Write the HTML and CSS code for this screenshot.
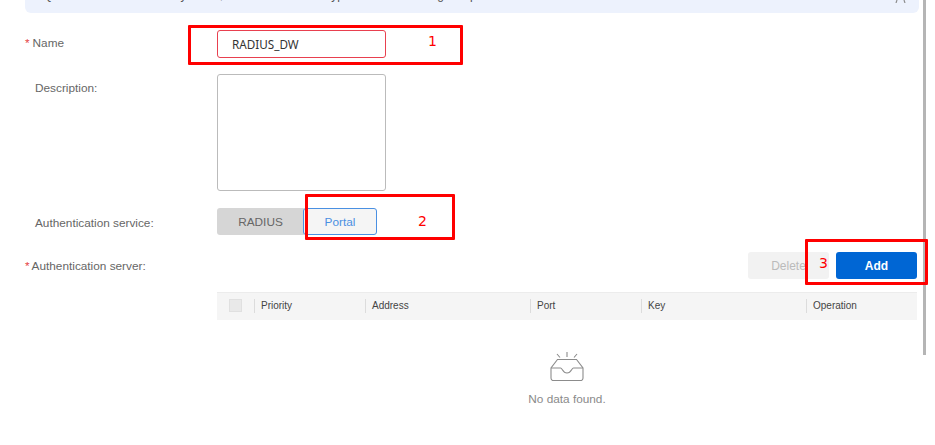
FILE: index.html
```html
<!DOCTYPE html>
<html lang="en">
<head>
<meta charset="utf-8">
<title>Authentication server template</title>
<link rel="stylesheet" href="styles.css">
</head>
<body>
<div class="page">
  <div class="scrollbar"></div>
  <div class="banner">
    <p class="banner-text">Q: Set radius and local key mode, and select a mode type for the server log into port</p>
    <svg class="banner-close" width="12" height="3" viewBox="0 0 12 3" fill="none" stroke="#8c8c8c" stroke-width="1.2">
      <path d="M2 0l-1 3M9 0l1 3"/>
    </svg>
  </div>
  <form class="form">
    <div class="row row-name">
      <label class="label label-name"><span class="req">*</span>Name</label>
      <input class="input" type="text" value="RADIUS_DW">
    </div>
    <div class="row row-desc">
      <label class="label label-plain">Description:</label>
      <textarea class="textarea"></textarea>
    </div>
    <div class="row row-service">
      <label class="label label-plain label-service">Authentication service:</label>
      <div class="toggle">
        <span class="toggle-off">RADIUS</span>
        <span class="toggle-on">Portal</span>
      </div>
    </div>
    <div class="row row-server">
      <label class="label label-server"><span class="req">*</span>Authentication server:</label>
      <div class="actions">
        <button type="button" class="btn btn-disabled">Delete</button>
        <button type="button" class="btn btn-primary">Add</button>
      </div>
    </div>
    <div class="table-wrap">
      <div class="thead">
        <div class="th th-check"><span class="checkbox"></span></div>
        <div class="th th-priority">Priority</div>
        <div class="th th-address">Address</div>
        <div class="th th-port">Port</div>
        <div class="th th-key">Key</div>
        <div class="th th-op">Operation</div>
      </div>
      <div class="empty">
        <svg class="empty-icon" width="34" height="30" viewBox="0 0 34 30" fill="none" stroke="#8c8c8c" stroke-width="1.1">
          <path d="M17 0v5M7 2l3 3.500M27 2l-3 3.500"/>
          <path d="M7.500 7.500h19l6.500 8.500v10a2.500 2.500 0 0 1-2.500 2.500h-27a2.500 2.500 0 0 1-2.500-2.500v-10z"/>
          <path d="M1 16h9.500c2 0 2 5 6.500 5s4.500-5 6.500-5h9.500"/>
        </svg>
        <p class="empty-text">No data found.</p>
      </div>
    </div>
  </form>
  <div class="mark mark-1"></div>
  <div class="mark mark-2"></div>
  <div class="mark mark-3"></div>
  <span class="num num-1">1</span>
  <span class="num num-2">2</span>
  <span class="num num-3">3</span>
</div>
</body>
</html>
```

FILE: styles.css
```css
* { box-sizing: border-box; }
html, body { margin: 0; height: 100%; overflow: hidden; background: #fff; }
.page {
  position: relative;
  width: 935px;
  height: 445px;
  overflow: hidden;
  font-family: "Liberation Sans", Arial, sans-serif;
  font-size: 11.8px;
  color: #666;
}
.scrollbar {
  position: absolute;
  left: 923px;
  top: 0;
  width: 3px;
  height: 355px;
  background: #b5b5b5;
}
.banner {
  height: 13px;
  margin: 0 16px 0 25px;
  background: #edf2fd;
  border-radius: 0 0 6px 6px;
  overflow: hidden;
  position: relative;
}
.banner-text {
  position: absolute;
  left: 18px;
  bottom: 11px;
  margin: 0;
  font-size: 12px;
  color: #555;
  line-height: 14px;
  white-space: nowrap;
}
.banner-close {
  position: absolute;
  right: 12px;
  top: 0;
  display: block;
}
.form { display: flex; flex-direction: column; }
.row { display: flex; align-items: center; }
.label { width: 217px; flex: none; padding-left: 25px; }
.label-plain { padding-left: 35px; }
.label-name { padding-bottom: 2px; }
.label-service { padding-top: 2px; }
.req { color: #e54545; margin-right: 3px; }
.label-server { padding-left: 25px; }
.label-server .req { margin-right: 2px; }
.row-name { margin-top: 17px; height: 28px; }
.input {
  width: 169px;
  height: 28px;
  padding: 0 14px;
  border: 1px solid #e8404f;
  border-radius: 3px;
  font: 11.7px "Noto Sans", sans-serif;
  color: #333;
  outline: none;
}
.row-desc { margin-top: 16px; height: 117px; align-items: flex-start; }
.row-desc .label { padding-top: 7px; }
.textarea {
  width: 169px;
  height: 117px;
  border: 1px solid #bbb;
  border-radius: 3px;
  resize: none;
  display: block;
}
.row-service { margin-top: 17px; height: 27px; }
.toggle { display: flex; height: 27px; }
.toggle-off {
  width: 87px;
  background: #d6d6d6;
  border-radius: 3px 0 0 3px;
  color: #666;
  display: flex;
  align-items: center;
  justify-content: center;
}
.toggle-on {
  width: 74px;
  margin-left: -1px;
  background: #f5f5f5;
  border: 1px solid #4a90e2;
  border-radius: 3px;
  color: #4a90e2;
  display: flex;
  align-items: center;
  justify-content: center;
}
.row-server { margin-top: 17px; height: 27px; padding-right: 18px; }
.actions { margin-left: auto; display: flex; gap: 7px; }
.btn {
  width: 81px;
  height: 27px;
  border: 0;
  border-radius: 3px;
  font: 12px "Liberation Sans", Arial, sans-serif;
}
.btn-disabled { background: #f2f2f2; color: #bbb; }
.btn-primary { background: #0066d4; color: #fff; font-weight: bold; }
.table-wrap { margin: 13px 18px 0 217px; }
.thead {
  display: flex;
  align-items: center;
  height: 28px;
  padding-bottom: 2px;
  background: #f5f5f5;
  border-top: 1px solid #ececec;
  font-size: 10px;
  color: #444;
}
.th {
  height: 14px;
  line-height: 14px;
  padding-left: 6px;
  border-left: 1px solid #dcdcdc;
  flex: none;
}
.th-check {
  width: 37px;
  border-left: 0;
  padding-left: 12px;
  display: flex;
  align-items: center;
}
.checkbox {
  width: 13px;
  height: 13px;
  background: #e9e9e9;
  border: 1px solid #e0e0e0;
  display: block;
}
.th-priority { width: 111px; }
.th-address { width: 165px; }
.th-port { width: 111px; }
.th-key { width: 165px; }
.th-op { width: 111px; }
.empty {
  display: flex;
  flex-direction: column;
  align-items: center;
  padding-top: 32px;
}
.empty-icon { display: block; }
.empty-text { margin: 10px 0 0; line-height: 14px; color: #8a8a8a; }
.mark {
  position: absolute;
  border: 3px solid #f00;
  border-radius: 1px;
}
.mark-1 { left: 188px; top: 25px; width: 275px; height: 40px; }
.mark-2 { left: 305px; top: 194px; width: 150px; height: 46px; }
.mark-3 { left: 805px; top: 239px; width: 123px; height: 46px; }
.num {
  position: absolute;
  color: #f00;
  font-family: "DejaVu Sans", sans-serif;
  font-size: 14px;
  line-height: 16px;
}
.num-1 { left: 428px; top: 33px; }
.num-2 { left: 418px; top: 213px; }
.num-3 { left: 819px; top: 255px; }
```
